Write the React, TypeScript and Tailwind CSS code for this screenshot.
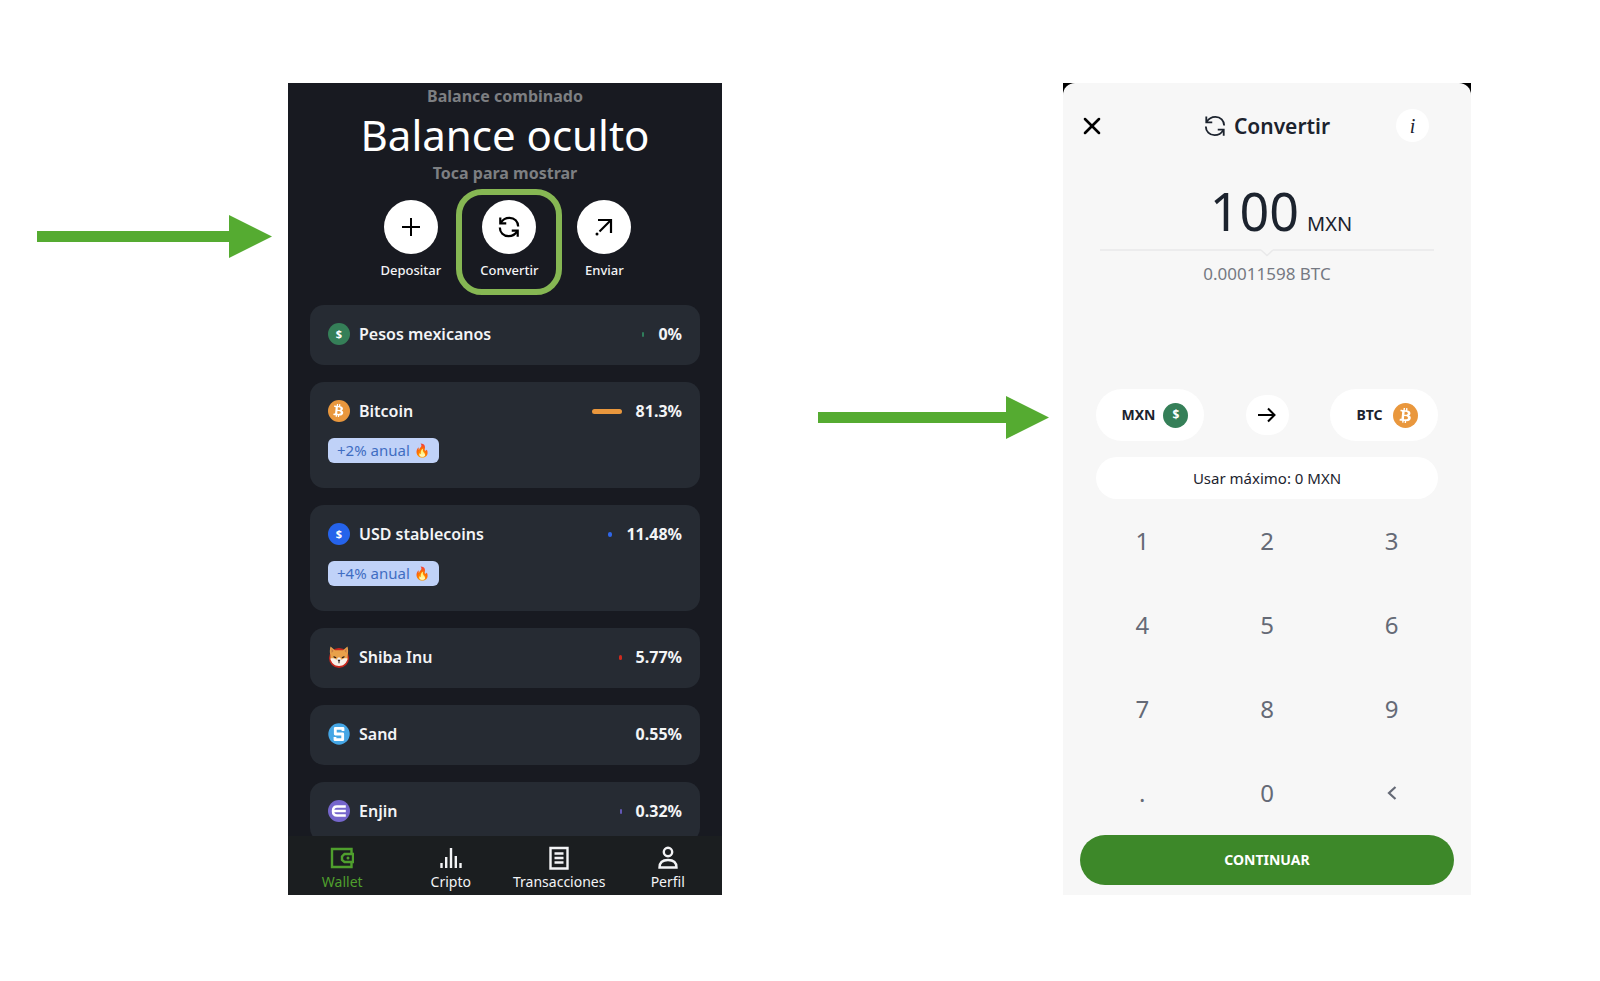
import { X } from "lucide-react";
import { FaBtc } from "react-icons/fa";
import type { ReactNode } from "react";

type Asset = {
  name: string;
  percent: string;
  icon: ReactNode;
  bar?: string;
  badge?: string;
};

const ConvertIcon = ({ strokeWidth = 2 }: { strokeWidth?: number }) => (
  <svg viewBox="0 0 24 24" className="size-[22px]" fill="none" stroke="currentColor" strokeWidth={strokeWidth} aria-hidden="true">
    <path d="M2.500 1.500v6.500h6.500" />
    <path d="M3 7.500C5 4 8.500 2 12.500 2c5.500 0 9.500 4 9.500 9.500" />
    <path d="M21.500 22.500V16H15" />
    <path d="M21 16.500C19 20 15.500 22 11.500 22 6 22 2 18 2 12.500" />
  </svg>
);

const SendIcon = () => (
  <svg viewBox="0 0 18 18" className="size-[18px]" fill="none" stroke="currentColor" strokeWidth="2.200" aria-hidden="true">
    <path d="M3 2h13v13" />
    <path d="M15.500 2.500 4.500 13.500" />
    <circle cx="2" cy="16" r="1.500" fill="currentColor" stroke="none" />
  </svg>
);

const PlusIcon = () => (
  <svg viewBox="0 0 18 18" className="size-[18px]" fill="none" stroke="currentColor" strokeWidth="2" aria-hidden="true">
    <path d="M9 0v18M0 9h18" />
  </svg>
);

const DollarCoin = ({ className }: { className: string }) => (
  <span className={`flex items-center justify-center rounded-full font-bold text-white ${className}`}>$</span>
);

const BitcoinCoin = ({ className }: { className: string }) => (
  <span className={`flex items-center justify-center rounded-full bg-[#e9973d] text-white ${className}`}>
    <FaBtc className="size-[60%] rotate-6" aria-hidden="true" />
  </span>
);

const ShibaIcon = () => (
  <svg viewBox="0 0 22 22" className="size-[22px]" aria-hidden="true">
    <circle cx="11" cy="12" r="10" fill="#c8281e" />
    <path d="M2.500.5 7 4.200h8L19.500.5c.8 3 .8 6 .2 8.500L19.500 14 11 20 2.500 14 2.300 9C1.700 6.500 1.700 3.500 2.500.5Z" fill="#e8a14a" />
    <path d="M3.500 2.500 5.500 5 3.600 7ZM18.500 2.500 16.500 5l1.900 2Z" fill="#c77a45" />
    <path d="M2.500 12.500c2.500-.8 4.500-.2 6 1.200l1.500-2.200h2l1.500 2.200c1.500-1.400 3.500-2 6-1.200-.5 4-3.800 7.500-8.500 7.500s-8-3.500-8.500-7.500Z" fill="#f8f1ea" />
    <path d="m5.500 10 3 1.200-.8 1-2-.7ZM16.500 10l-3 1.200.8 1 2-.7ZM9.500 13.800h3L11.500 15.600v1.600h-1v-1.600Z" fill="#2a1c18" />
  </svg>
);

const SandIcon = () => (
  <svg viewBox="0 0 22 22" className="size-[22px]" aria-hidden="true">
    <circle cx="11" cy="11" r="10.700" fill="#45a6e5" />
    <path d="M15 8V5.300H7.300V11h7.400v5.700H7V14" fill="none" stroke="#fff" strokeWidth="2.800" strokeLinejoin="round" />
  </svg>
);

const EnjinIcon = () => (
  <svg viewBox="0 0 22 22" className="size-[22px]" aria-hidden="true">
    <circle cx="11" cy="11" r="11" fill="#7566cc" />
    <path d="M17.800 6.500H9Q5 6.500 5 11t4 4.600h8.800M6 11h11.800" fill="none" stroke="#fff" strokeWidth="2.500" />
  </svg>
);

const WalletIcon = () => (
  <svg viewBox="0 0 24 24" className="size-6" fill="none" stroke="currentColor" strokeWidth="2.400" aria-hidden="true">
    <path d="M21.500 7.500V3H2v18h19.500v-4.500" />
    <path d="M23 8h-8.500L12 10.500v3.500l2.500 2H23Z" />
    <circle cx="18" cy="12" r="1.500" fill="currentColor" stroke="none" />
  </svg>
);

const BarsIcon = () => (
  <svg viewBox="0 0 24 24" className="size-6" fill="none" stroke="currentColor" strokeWidth="2.400" aria-hidden="true">
    <path d="M2.500 17v5M7.200 11v11M12 2v20M16.800 10v12M21.500 17v5" />
  </svg>
);

const ListIcon = () => (
  <svg viewBox="0 0 24 24" className="size-6" fill="none" stroke="currentColor" strokeWidth="2.400" aria-hidden="true">
    <path d="M3.500 2h17v20.500h-17Z" />
    <path d="M7.500 7.500h9M7.500 12h9M7.500 16.500h9" />
  </svg>
);

const ProfileIcon = () => (
  <svg viewBox="0 0 24 24" className="size-6" fill="none" stroke="currentColor" strokeWidth="2.400" aria-hidden="true">
    <circle cx="12" cy="6" r="4.200" />
    <path d="M3.500 21.500c0-5 2.500-7.500 8.500-7.500s8.500 2.500 8.500 7.500Z" />
  </svg>
);

const assets: Asset[] = [
  { name: "Pesos mexicanos", percent: "0%", icon: <DollarCoin className="size-[22px] bg-[#357f58] text-[11px]" />, bar: "w-0.5 bg-[#2f7d5b]" },
  { name: "Bitcoin", percent: "81.3%", icon: <BitcoinCoin className="size-[22px]" />, bar: "w-[30px] bg-[#e9973d]", badge: "+2% anual" },
  { name: "USD stablecoins", percent: "11.48%", icon: <DollarCoin className="size-[22px] bg-[#2563eb] text-[11px]" />, bar: "w-1 bg-[#2f66e8]", badge: "+4% anual" },
  { name: "Shiba Inu", percent: "5.77%", icon: <ShibaIcon />, bar: "w-[3px] bg-[#cf2a1e]" },
  { name: "Sand", percent: "0.55%", icon: <SandIcon /> },
  { name: "Enjin", percent: "0.32%", icon: <EnjinIcon />, bar: "w-0.5 bg-[#6257b5]" },
];

const tabs = [
  { label: "Wallet", icon: <WalletIcon />, active: true },
  { label: "Cripto", icon: <BarsIcon /> },
  { label: "Transacciones", icon: <ListIcon /> },
  { label: "Perfil", icon: <ProfileIcon /> },
];

const keys = ["1", "2", "3", "4", "5", "6", "7", "8", "9", ".", "0"];

const Arrow = () => (
  <div className="flex items-center text-[#55ab31]" aria-hidden="true">
    <div className="h-[11px] flex-1 bg-[#55ab31]" />
    <svg viewBox="0 0 43 43" className="size-[43px]" fill="currentColor">
      <path d="M0 0 43 21.500 0 43Z" />
    </svg>
  </div>
);

const RoundAction = ({ label, icon, highlighted }: { label: string; icon: ReactNode; highlighted?: boolean }) => (
  <button className="relative flex flex-col items-center gap-2">
    <span className="flex size-[54px] items-center justify-center rounded-full bg-white text-black">{icon}</span>
    <span className="text-[13px] leading-4 font-medium text-gray-100">{label}</span>
    {highlighted && (
      <span className="absolute -top-[11px] left-1/2 size-[106px] -translate-x-1/2 rounded-[26px] border-6 border-[#86b753]" />
    )}
  </button>
);

const AssetCard = ({ asset }: { asset: Asset }) => (
  <li
    className={`flex shrink-0 flex-col gap-4 rounded-[14px] bg-[#262b33] px-[18px] pt-[18px] ${
      asset.badge ? "pb-[25px]" : "pb-5"
    }`}
  >
    <div className="flex h-[22px] items-center">
      {asset.icon}
      <span className="ml-[9px] flex-1 text-base leading-5 font-semibold text-gray-100">{asset.name}</span>
      {asset.bar && <span className={`mr-3.5 h-[5px] rounded-full ${asset.bar}`} />}
      <span className="text-base leading-5 font-bold text-gray-100">{asset.percent}</span>
    </div>
    {asset.badge && (
      <span className="flex h-[25px] items-center gap-1 self-start rounded-md bg-[#c0d2f8] px-[9px] text-[15px] text-[#3f6dc2]">
        {asset.badge} <span className="text-[13px]">🔥</span>
      </span>
    )}
  </li>
);

const WalletScreen = () => (
  <section className="flex flex-col bg-[#181a21] text-white">
    <div className="flex h-[753px] flex-col overflow-hidden px-[22px] pt-[3px]">
      <header className="flex flex-col items-center">
        <p className="text-base leading-5 font-bold text-[#7d7f82]">Balance combinado</p>
        <h1 className="mt-0.5 text-[42px] leading-[54px]">Balance oculto</h1>
        <p className="mt-px text-base leading-5 font-bold text-[#7d7f82]">Toca para mostrar</p>
      </header>
      <div className="mt-[17px] flex justify-center gap-[39px] pl-0.5">
        <RoundAction label="Depositar" icon={<PlusIcon />} />
        <RoundAction label="Convertir" icon={<ConvertIcon strokeWidth={2.4} />} highlighted />
        <RoundAction label="Enviar" icon={<SendIcon />} />
      </div>
      <ul className="mt-[27px] flex flex-col gap-[17px]">
        {assets.map((asset) => (
          <AssetCard key={asset.name} asset={asset} />
        ))}
      </ul>
    </div>
    <nav className="grid grid-cols-4 bg-[#1b1e20] pt-2.5 pb-[3px]">
      {tabs.map((tab) => (
        <a
          key={tab.label}
          href="#"
          className={`flex flex-col items-center gap-0.5 text-sm leading-5 ${tab.active ? "text-[#4f9f2d]" : "text-gray-100"}`}
        >
          {tab.icon}
          {tab.label}
        </a>
      ))}
    </nav>
  </section>
);

const ConvertScreen = () => (
  <section className="bg-black text-[#1c232e]">
    <div className="flex h-full flex-col rounded-t-xl bg-[#f7f7f7] px-[17px] pt-[26px] pb-2.5">
      <header className="grid grid-cols-[1fr_auto_1fr] items-center">
        <button aria-label="Cerrar" className="-ml-0.5 justify-self-start text-black">
          <X size={28} strokeWidth={2.2} />
        </button>
        <h2 className="flex items-center gap-2 text-[21px] leading-8 font-semibold">
          <ConvertIcon />
          Convertir
        </h2>
        <button
          aria-label="Información"
          className="mr-[25px] flex size-[33px] items-center justify-center justify-self-end rounded-full bg-white font-['Liberation_Serif',serif] text-xl italic"
        >
          i
        </button>
      </header>

      <div className="mx-5 mt-[39px] flex flex-col items-center">
        <p className="flex items-baseline gap-2 pl-7">
          <span className="text-[52px] leading-[60px]">100</span>
          <span className="text-xl leading-6">MXN</span>
        </p>
        <div className="mt-2 flex w-full items-start text-[#e9e9ea]">
          <span className="h-0.5 flex-1 bg-[#ececed]" />
          <svg viewBox="0 0 12 8" className="h-2 w-3" fill="none" stroke="currentColor" strokeWidth="1.500" aria-hidden="true">
            <path d="m0 1 6 5.500L12 1" />
          </svg>
          <span className="h-0.5 flex-1 bg-[#ececed]" />
        </div>
        <p className="mt-[7px] text-[17px] leading-5 text-[#757982]">0.00011598 BTC</p>
      </div>

      <div className="mx-4 mt-[105px] flex items-center justify-between">
        <button className="flex h-[52px] w-[108px] items-center justify-center gap-2 rounded-full bg-white pl-2.5 text-sm font-bold">
          MXN
          <DollarCoin className="size-[25px] bg-[#357f58] text-xs" />
        </button>
        <button
          aria-label="Invertir"
          className="flex h-10 w-[43px] items-center justify-center rounded-full bg-white text-black"
        >
          <svg viewBox="0 0 18 16" className="h-4 w-[18px]" fill="none" stroke="currentColor" strokeWidth="2" aria-hidden="true">
            <path d="M0 8h16M10 1.500 16.500 8 10 14.500" />
          </svg>
        </button>
        <button className="flex h-[52px] w-[108px] items-center justify-center gap-2.5 rounded-full bg-white pl-1.5 text-sm font-bold">
          BTC
          <BitcoinCoin className="size-[25px]" />
        </button>
      </div>
      <button className="mx-4 mt-4 h-[42px] rounded-full bg-white text-[15px]">Usar máximo: 0 MXN</button>

      <div className="grid grid-cols-3 text-2xl text-[#656a76]">
        {keys.map((key) => (
          <button key={key} className="h-[84px]">
            {key}
          </button>
        ))}
        <button aria-label="Borrar" className="flex h-[84px] items-center justify-center">
          <svg viewBox="0 0 10 14" className="h-3.5 w-2.5" fill="none" stroke="currentColor" strokeWidth="2.200" aria-hidden="true">
            <path d="M8.500 1 2 7l6.500 6" />
          </svg>
        </button>
      </div>
      <button className="h-[50px] rounded-full bg-[#3d8829] text-sm font-bold text-white">CONTINUAR</button>
    </div>
  </section>
);

export default function App() {
  return (
    <main className="grid min-h-screen grid-cols-[288fr_434fr_341fr_408fr_129fr] content-start bg-white py-[83px] font-['Noto_Sans',sans-serif]">
      <div className="pt-[132px] pr-4 pl-[37px]">
        <Arrow />
      </div>
      <WalletScreen />
      <div className="pt-[313px] pr-3.5 pl-24">
        <Arrow />
      </div>
      <ConvertScreen />
    </main>
  );
}
